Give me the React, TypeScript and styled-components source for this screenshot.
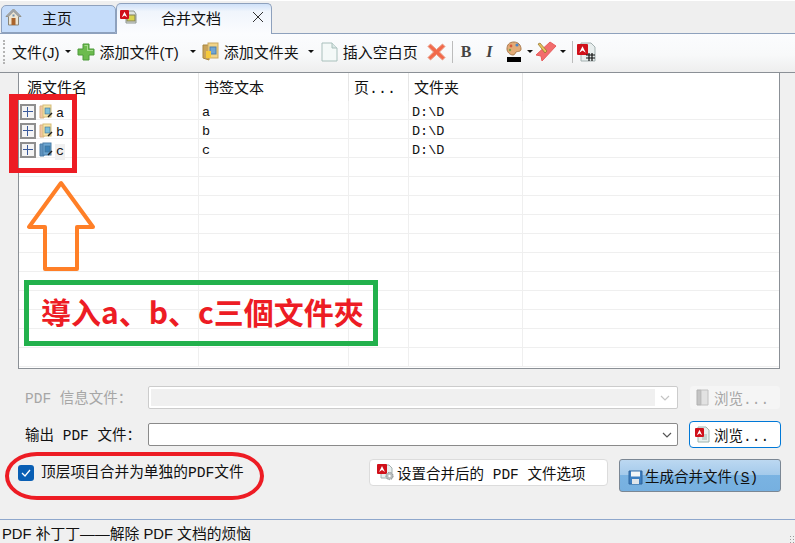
import styled, { createGlobalStyle } from "styled-components";

const GlobalStyle = createGlobalStyle`
  html, body {
    margin: 0;
    padding: 0;
    background: #f0f0f0;
  }
`;

const UI_FONT = `"Liberation Sans", "Noto Sans CJK SC", sans-serif`;
const FORM_FONT = `"Liberation Mono", "Noto Sans CJK SC", monospace`;

const Page = styled.div`
  width: 795px;
  height: 543px;
  position: relative;
  overflow: hidden;
  display: flex;
  flex-direction: column;
  background: #f0f0f0;
  font-family: ${UI_FONT};
  color: #111;
`;

const TabBar = styled.div`
  height: 29px;
  padding-top: 3px;
  display: flex;
  align-items: flex-end;
  border-top: 1px solid #fff;
  border-bottom: 1px solid #8ea1bd;
  background: #efefef;
`;
const Tab = styled.div<{ $active?: boolean; $width: number }>`
  box-sizing: border-box;
  width: ${(p) => p.$width}px;
  height: ${(p) => (p.$active ? 31 : 28)}px;
  margin-left: ${(p) => (p.$active ? 0 : 1)}px;
  margin-bottom: ${(p) => (p.$active ? -1 : 0)}px;
  padding: 0 0 4px 3px;
  display: flex;
  align-items: center;
  font-size: 15px;
  border: 1px solid #8ea1bd;
  border-bottom: ${(p) => (p.$active ? "none" : "1px solid #8ea1bd")};
  border-radius: 5px 5px 0 0;
  background: ${(p) =>
    p.$active ? "linear-gradient(#cfe1f8 0, #f0f5fc 25%, #fbfcfe 100%)" : "#c5dcfa"};
  z-index: ${(p) => (p.$active ? 1 : 0)};
`;
const TabLabel = styled.span<{ $left: number }>`
  margin-left: ${(p) => p.$left}px;
`;
const TabClose = styled.svg`
  margin-left: 31px;
`;

const Toolbar = styled.div`
  height: 35px;
  padding-bottom: 3px;
  display: flex;
  align-items: center;
  font-size: 15px;
  border-bottom: 1px solid #8b9096;
  background: linear-gradient(#fbfcfe 0, #f8f9fa 55%, #eeeeee 100%);
`;
const Grip = styled.div`
  width: 2px;
  height: 24px;
  margin: 0 5px 0 3px;
  border-left: 2px dotted #b4b4b4;
`;
const ToolItem = styled.div<{ $left?: number }>`
  display: flex;
  align-items: center;
  gap: 5px;
  margin-left: ${(p) => p.$left ?? 0}px;
  white-space: nowrap;
`;
const Caret = styled.span<{ $left: number }>`
  width: 0;
  height: 0;
  margin-left: ${(p) => p.$left}px;
  border-left: 3px solid transparent;
  border-right: 3px solid transparent;
  border-top: 3px solid #111;
`;
const ToolSep = styled.span<{ $left: number }>`
  width: 1px;
  height: 22px;
  margin-left: ${(p) => p.$left}px;
  background: #bcbcbc;
`;
const FontGlyph = styled.span<{ $italic?: boolean; $left: number }>`
  margin-left: ${(p) => p.$left}px;
  font-family: "Liberation Serif", serif;
  font-size: 16px;
  font-weight: 700;
  font-style: ${(p) => (p.$italic ? "italic" : "normal")};
  color: #444;
`;

const List = styled.div`
  box-sizing: border-box;
  width: 762px;
  height: 296px;
  margin: 0 0 16px 18px;
  overflow: hidden;
  border: 1px solid #8b9096;
  border-top: none;
  background: #fff;
`;
const GRID = "180px 150px 60px 114px 1fr";
const HeaderRow = styled.div`
  display: grid;
  grid-template-columns: ${GRID};
  height: 28px;
  font-family: ${FORM_FONT};
  font-size: 15px;
`;
const HeaderCell = styled.div`
  box-sizing: border-box;
  padding: 6px 0 0 5px;
  line-height: 22px;
  border-right: 1px solid #e6e6e6;
  &:first-child {
    padding-left: 8px;
  }
`;
const Row = styled.div`
  display: grid;
  grid-template-columns: ${GRID};
  box-sizing: border-box;
  height: 19px;
  font-family: ${FORM_FONT};
  font-size: 13.5px;
  border-bottom: 1px solid #efefef;
`;
const Cell = styled.div`
  box-sizing: border-box;
  padding: 2px 0 0 3px;
  line-height: 20px;
  border-right: 1px solid #efefef;
`;
const TreeCell = styled(Cell)`
  display: flex;
  align-items: center;
  padding: 0 0 0 1px;
`;
const Expander = styled.span`
  box-sizing: border-box;
  width: 16px;
  height: 16px;
  position: relative;
  border: 2px solid #8f8f8f;
  background: #f4f4f4;
  &::before,
  &::after {
    content: "";
    position: absolute;
    background: #3a5a9c;
  }
  &::before {
    left: 1px;
    right: 1px;
    top: 5px;
    height: 1px;
  }
  &::after {
    top: 1px;
    bottom: 1px;
    left: 5px;
    width: 1px;
  }
`;
const NodeName = styled.span<{ $selected?: boolean }>`
  margin: 3px 0 0 1px;
  padding: 0 1px;
  line-height: 16px;
  background: ${(p) => (p.$selected ? "#f0f0f0" : "transparent")};
`;

const Form = styled.div`
  display: flex;
  flex-direction: column;
  font-family: ${FORM_FONT};
  font-size: 14.5px;
`;
const FieldRow = styled.div<{ $height: number }>`
  display: flex;
  align-items: center;
  height: ${(p) => p.$height}px;
  margin-bottom: 11px;
  padding-left: 25px;
`;
const FieldLabel = styled.div<{ $disabled?: boolean }>`
  width: 123px;
  padding-bottom: 2px;
  color: ${(p) => (p.$disabled ? "#a6a6a6" : "#111")};
  white-space: pre;
`;
const Combo = styled.div<{ $disabled?: boolean }>`
  box-sizing: border-box;
  width: 530px;
  height: 23px;
  display: flex;
  align-items: center;
  justify-content: flex-end;
  padding: ${(p) => (p.$disabled ? "2px" : "0")};
  border: 1px solid ${(p) => (p.$disabled ? "#cccccc" : "#8a8a8a")};
  border-radius: 2px;
  background: #fff;
`;
const ComboFill = styled.div`
  flex: 1;
  height: 100%;
  background: #f0f0f0;
`;
const ChevronSvg = styled.svg`
  margin: 0 5px;
`;
const BrowseButton = styled.div<{ $disabled?: boolean }>`
  box-sizing: border-box;
  width: 92px;
  height: ${(p) => (p.$disabled ? 25 : 27)}px;
  margin-left: 11px;
  padding-left: 5px;
  display: flex;
  align-items: center;
  gap: 4px;
  border: ${(p) => (p.$disabled ? "1px solid #f0f0f0" : "1px solid #0078d7")};
  border-radius: 4px;
  background: ${(p) => (p.$disabled ? "#f5f5f5" : "#fff")};
  color: ${(p) => (p.$disabled ? "#a6a6a6" : "#111")};
`;

const BottomRow = styled.div`
  display: flex;
  align-items: flex-start;
  height: 33px;
  padding-left: 18px;
`;
const CheckBox = styled.span`
  width: 16px;
  height: 16px;
  margin-top: 6px;
  display: flex;
  align-items: center;
  justify-content: center;
  border-radius: 3px;
  background: #0a5fb4;
`;
const CheckLabel = styled.span`
  width: 328px;
  margin: 5px 0 0 7px;
  font-size: 14.7px;
  line-height: 18px;
  white-space: nowrap;
`;
const OptionsButton = styled.div`
  box-sizing: border-box;
  width: 239px;
  height: 27px;
  padding: 0 0 1px 7px;
  display: flex;
  align-items: center;
  gap: 2px;
  border: 1px solid #dcdcdc;
  border-radius: 4px;
  background: #fff;
  white-space: pre;
`;
const GenerateButton = styled.div`
  box-sizing: border-box;
  width: 162px;
  height: 33px;
  margin-left: 11px;
  padding-left: 8px;
  display: flex;
  align-items: center;
  gap: 2px;
  border: 1px solid #7b8794;
  border-radius: 3px;
  background: linear-gradient(#bcd8f1 0, #a4caeb 48%, #7ab3e2 50%, #76b0e0 100%);
  svg {
    margin-top: 3px;
  }
`;
const Underlined = styled.span`
  text-decoration: underline;
`;

const StatusBar = styled.div`
  margin-top: auto;
  box-sizing: border-box;
  height: 24px;
  padding: 4px 0 0 2px;
  position: relative;
  font-size: 14.8px;
  line-height: 20px;
  border-top: 1px solid #8ea7cc;
`;
const ResizeGrip = styled.span`
  position: absolute;
  right: 0;
  bottom: 0;
  width: 6px;
  height: 8px;
  background-image: radial-gradient(#9a9a9a 1px, transparent 1px);
  background-size: 3px 3px;
`;

/* annotations painted over the screenshot */
const RedFrame = styled.div`
  box-sizing: border-box;
  position: absolute;
  left: 9px;
  top: 94px;
  width: 68px;
  height: 79px;
  border: solid #ed1c24;
  border-width: 6px 5px 5px 9px;
`;
const ArrowSvg = styled.svg`
  position: absolute;
  left: 24px;
  top: 178px;
`;
const GreenFrame = styled.div`
  box-sizing: border-box;
  position: absolute;
  left: 24px;
  top: 280px;
  width: 354px;
  height: 66px;
  padding: 0 0 5px 12px;
  display: flex;
  align-items: center;
  border: 5px solid #22b14c;
  color: #ed1c24;
  font-family: "Noto Sans CJK SC", "Noto Sans", sans-serif;
  font-size: 30px;
  font-weight: 700;
  white-space: nowrap;
`;
const RedEllipse = styled.div`
  box-sizing: border-box;
  position: absolute;
  left: 5px;
  top: 452px;
  width: 259px;
  height: 48px;
  border: 4px solid #ed1c24;
  border-radius: 32px / 24px;
`;

const PdfBadge = ({ x = 0, y = 0, s = 10 }: { x?: number; y?: number; s?: number }) => (
  <g transform={`translate(${x} ${y})`}>
    <rect width={s} height={s} rx="1" fill="#d0101a" />
    <path
      d={`M${s * 0.2} ${s * 0.8}L${s / 2} ${s * 0.2}L${s * 0.8} ${s * 0.8}L${s / 2} ${s * 0.6}Z`}
      fill="#fff"
    />
  </g>
);

const HomeIcon = () => (
  <svg width="17" height="18" viewBox="0 0 17 18">
    <path d="M8.5 1L1 8.5h2.5V17h10V8.5H16Z" fill="#efe6d2" stroke="#8a8577" />
    <path d="M8.5 1L1 8.5h3l4.5-4.5 4.5 4.5h3Z" fill="#9fa3a5" />
    <rect x="6.5" y="10" width="4" height="7" fill="#a9642c" />
    <rect x="7.5" y="6.5" width="2" height="2" fill="#6f8fb0" />
  </svg>
);

const MergeIcon = () => (
  <svg width="17" height="16" viewBox="0 0 17 16">
    <path d="M6 2h8l2 3v9H6Z" fill="#dfe3e0" stroke="#8d9590" />
    <rect x="7" y="6" width="8" height="6" fill="#d8d24f" stroke="#7e7f5a" />
    <PdfBadge x={0} y={1} s={9} />
  </svg>
);

const PlusIcon = () => (
  <svg width="18" height="18" viewBox="0 0 18 18">
    <path d="M6 1h6v5h5v6h-5v5H6v-5H1V6h5Z" fill="#6cbb4e" stroke="#4d9a3a" />
    <path d="M7 2h4v5h5v1H10V3H8Z" fill="#a6dd8d" />
  </svg>
);

const FolderIcon = () => (
  <svg width="17" height="19" viewBox="0 0 17 19">
    <path d="M1 3h5l1 2v13l-6-2Z" fill="#c9a35a" stroke="#a9873f" />
    <rect x="6" y="1" width="10" height="15" fill="#f1d488" stroke="#c9a860" />
    <rect x="8" y="5" width="6" height="7" fill="#6fa5d6" stroke="#4f7ea8" />
    <rect x="4" y="9" width="5" height="7" fill="#f5c93b" />
  </svg>
);

const BlankPageIcon = () => (
  <svg width="17" height="20" viewBox="0 0 17 20">
    <path d="M1 1h10l5 5v13H1Z" fill="#f4f9f8" stroke="#a9c0bc" />
    <path d="M11 1v5h5" fill="#dbe8e6" stroke="#a9c0bc" />
  </svg>
);

const DeleteIcon = () => (
  <svg width="19" height="18" viewBox="0 0 19 18">
    <path
      d="M3.5 1L9.5 6.5 15.5 1 18 3.5 12.5 9 18 14.5 15.5 17 9.5 11.5 3.5 17 1 14.5 6.5 9 1 3.5Z"
      fill="#f2694a"
      stroke="#e9a08a"
    />
  </svg>
);

const PaletteIcon = () => (
  <svg width="16" height="21" viewBox="0 0 16 21">
    <path d="M8 1C3 1 1 4 1 8c0 3 3 6 6 6 2 0 2-2 3-3 2-1 5 0 5-3 0-4-3-7-7-7Z" fill="#e3ab76" stroke="#a9794b" />
    <circle cx="11" cy="4" r="1.6" fill="#4c86c6" />
    <circle cx="5" cy="5" r="1.4" fill="#d75b3c" />
    <circle cx="4" cy="9" r="1.2" fill="#7aa34c" />
    <rect x="1" y="16" width="14" height="5" fill="#000" />
  </svg>
);

const MarkerIcon = () => (
  <svg width="21" height="21" viewBox="0 0 21 21">
    <path d="M14 1l6 4L6 20l-1-5-5-1Z" fill="#f26d6d" stroke="#e85c5c" />
    <path d="M2 3l2-1 7 8-2 2Z" fill="#e8c25a" stroke="#8d6f2b" strokeWidth="0.7" />
  </svg>
);

const PdfHashIcon = () => (
  <svg width="19" height="20" viewBox="0 0 19 20">
    <path d="M4 1h10l4 4v14H4Z" fill="#e8eeee" stroke="#a3b0b0" />
    <PdfBadge x={0} y={2} s={11} />
    <path d="M9 13h9M9 16h9M12 11v8M15 11v8" stroke="#111" strokeWidth="1.2" />
  </svg>
);

const SmallFolder = ({ blue }: { blue?: boolean }) => (
  <svg width="15" height="16" viewBox="0 0 15 16" style={{ marginLeft: 3 }}>
    <path d="M1 2h4v12H1Z" fill={blue ? "#5f93bf" : "#f2c6a2"} stroke={blue ? "#4d7ea8" : "#d9b184"} />
    <rect x="4" y="1" width="8" height="12" fill={blue ? "#6da7d3" : "#f8e6a8"} stroke={blue ? "#4d7ea8" : "#d5bd7a"} />
    <rect x="6" y="4" width="5" height="6" fill={blue ? "#3f83b8" : "#7ec0d8"} stroke="#3f6f8f" strokeWidth="0.6" />
    <path d="M9 13l4-4" stroke="#222" strokeWidth="1.4" />
  </svg>
);

const Chevron = ({ color }: { color: string }) => (
  <ChevronSvg width="10" height="6" viewBox="0 0 10 6">
    <path d="M1 1l4 4 4-4" fill="none" stroke={color} strokeWidth="1.2" />
  </ChevronSvg>
);

const PdfDocIcon = ({ disabled }: { disabled?: boolean }) => (
  <svg width="15" height="17" viewBox="0 0 15 17">
    {disabled ? (
      <>
        <path d="M2 1h4v15H2Z" fill="#c4c4c4" stroke="#b0b0b0" />
        <path d="M6 1h7v15H6Z" fill="#e2e2e2" stroke="#c0c0c0" />
      </>
    ) : (
      <>
        <path d="M3 1h8l3 3v12H3Z" fill="#e8f0ee" stroke="#9fb3ad" />
        <path d="M7 9h5M7 11h5M7 13h5" stroke="#9fb3ad" />
        <PdfBadge x={0} y={2} s={9} />
      </>
    )}
  </svg>
);

const PdfGearIcon = () => (
  <svg width="18" height="18" viewBox="0 0 18 18">
    <path d="M4 2h8l3 3v10H4Z" fill="#e8eeee" stroke="#a3b0b0" />
    <PdfBadge x={0} y={1} s={10} />
    <circle cx="12.5" cy="13" r="3.6" fill="#b7bcbd" stroke="#8a9092" strokeDasharray="1.5 1" />
    <circle cx="12.5" cy="13" r="1.2" fill="#fff" />
  </svg>
);

const SaveIcon = () => (
  <svg width="15" height="15" viewBox="0 0 15 15">
    <path d="M1 1h13v13H1Z" fill="#3d7fc2" stroke="#2e659c" />
    <rect x="3" y="1.5" width="9" height="5" fill="#f3f6f8" />
    <rect x="4" y="9" width="7" height="5" fill="#dfe5ea" />
  </svg>
);

const rows = [
  { name: "a", folder: "D:\\D" },
  { name: "b", folder: "D:\\D" },
  { name: "c", folder: "D:\\D" },
];
const emptyRows = Array.from({ length: 11 }, (_, i) => i);

export default function App() {
  return (
    <Page>
      <GlobalStyle />
      <TabBar>
        <Tab $width={115}>
          <HomeIcon />
          <TabLabel $left={20}>主页</TabLabel>
        </Tab>
        <Tab $width={156} $active>
          <MergeIcon />
          <TabLabel $left={24}>合并文档</TabLabel>
          <TabClose width="12" height="12" viewBox="0 0 12 12">
            <path d="M1 1l10 10M11 1L1 11" stroke="#333" />
          </TabClose>
        </Tab>
      </TabBar>

      <Toolbar>
        <Grip />
        <ToolItem>文件(J)</ToolItem>
        <Caret $left={5} />
        <ToolItem $left={6}>
          <PlusIcon />
          添加文件(T)
        </ToolItem>
        <Caret $left={11} />
        <ToolItem $left={6}>
          <FolderIcon />
          添加文件夹
        </ToolItem>
        <Caret $left={9} />
        <ToolItem $left={7}>
          <BlankPageIcon />
          插入空白页
        </ToolItem>
        <ToolItem $left={9}>
          <DeleteIcon />
        </ToolItem>
        <ToolSep $left={6} />
        <FontGlyph $left={8}>B</FontGlyph>
        <FontGlyph $left={15} $italic>
          I
        </FontGlyph>
        <ToolItem $left={13}>
          <PaletteIcon />
        </ToolItem>
        <Caret $left={5} />
        <ToolItem $left={3}>
          <MarkerIcon />
        </ToolItem>
        <Caret $left={3} />
        <ToolSep $left={6} />
        <ToolItem $left={4}>
          <PdfHashIcon />
        </ToolItem>
      </Toolbar>

      <List>
        <HeaderRow>
          <HeaderCell>源文件名</HeaderCell>
          <HeaderCell>书签文本</HeaderCell>
          <HeaderCell>页...</HeaderCell>
          <HeaderCell>文件夹</HeaderCell>
          <div />
        </HeaderRow>
        {rows.map((row) => (
          <Row key={row.name}>
            <TreeCell>
              <Expander />
              <SmallFolder blue={row.name === "c"} />
              <NodeName $selected={row.name === "c"}>{row.name}</NodeName>
            </TreeCell>
            <Cell>{row.name}</Cell>
            <Cell />
            <Cell>{row.folder}</Cell>
            <div />
          </Row>
        ))}
        {emptyRows.map((i) => (
          <Row key={i}>
            <Cell />
            <Cell />
            <Cell />
            <Cell />
            <div />
          </Row>
        ))}
      </List>

      <Form>
        <FieldRow $height={25}>
          <FieldLabel $disabled>PDF 信息文件：</FieldLabel>
          <Combo $disabled>
            <ComboFill />
            <Chevron color="#c4c4c4" />
          </Combo>
          <BrowseButton $disabled>
            <PdfDocIcon disabled />
            浏览...
          </BrowseButton>
        </FieldRow>
        <FieldRow $height={27}>
          <FieldLabel>输出 PDF 文件：</FieldLabel>
          <Combo>
            <Chevron color="#555" />
          </Combo>
          <BrowseButton>
            <PdfDocIcon />
            浏览...
          </BrowseButton>
        </FieldRow>
        <BottomRow>
          <CheckBox>
            <svg width="10" height="8" viewBox="0 0 10 8">
              <path d="M1 4l3 3 5-6" fill="none" stroke="#fff" strokeWidth="1.3" />
            </svg>
          </CheckBox>
          <CheckLabel>顶层项目合并为单独的PDF文件</CheckLabel>
          <OptionsButton>
            <PdfGearIcon />
            设置合并后的 PDF 文件选项
          </OptionsButton>
          <GenerateButton>
            <SaveIcon />
            <span>
              生成合并文件(<Underlined>S</Underlined>)
            </span>
          </GenerateButton>
        </BottomRow>
      </Form>

      <StatusBar>
        PDF 补丁丁——解除 PDF 文档的烦恼
        <ResizeGrip />
      </StatusBar>

      <RedFrame />
      <ArrowSvg width="74" height="96" viewBox="0 0 74 96">
        <path
          d="M37 5L5 49H21V91H53V49H69Z"
          fill="none"
          stroke="#ff7f27"
          strokeWidth="4"
          strokeLinejoin="round"
        />
      </ArrowSvg>
      <GreenFrame>導入a、b、c三個文件夾</GreenFrame>
      <RedEllipse />
    </Page>
  );
}
